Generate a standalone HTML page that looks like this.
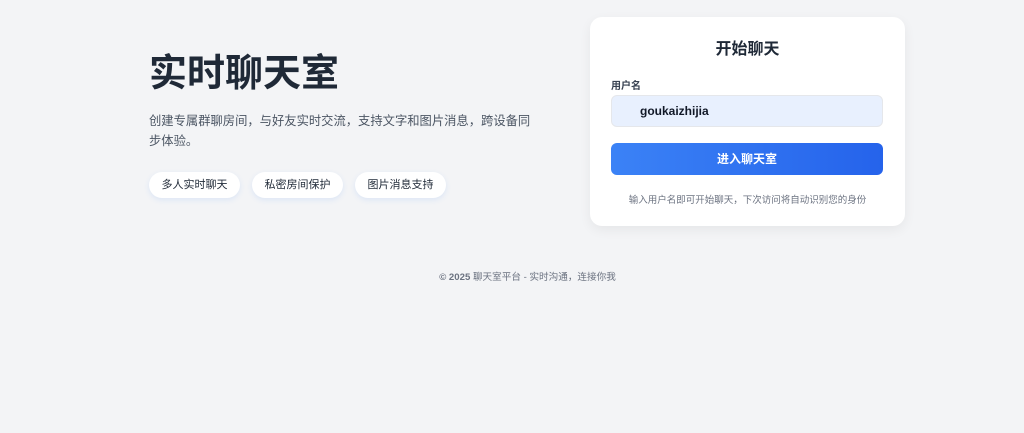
<!DOCTYPE html>
<html><head><meta charset="utf-8"><style>
*{margin:0;padding:0;box-sizing:border-box}
body{width:1024px;height:433px;background:#f3f4f6;font-family:"Liberation Sans","Noto Sans CJK SC",sans-serif;position:relative;overflow:hidden}
h1{position:absolute;left:149px;top:49px;font-size:38px;font-weight:700;color:#1f2937;line-height:50px;letter-spacing:0}
.desc{position:absolute;left:149px;top:111px;width:385px;font-size:12.3px;line-height:20px;color:#4b5563}
.tags{position:absolute;left:149px;top:172px;display:flex;gap:12px}
.tag{width:91px;text-align:center;height:26px;line-height:26px;background:#fff;border-radius:13px;font-size:11px;color:#1f2937;box-shadow:0 2px 6px rgba(59,130,246,.12)}
.card{position:absolute;left:590px;top:17px;width:315px;height:209px;background:#fff;border-radius:12px;box-shadow:0 4px 12px rgba(0,0,0,.06)}
.card h2{text-align:center;margin-top:22px;font-size:16px;font-weight:700;color:#1f2937;line-height:22px}
.lbl{position:absolute;left:21px;top:60px;font-size:10px;font-weight:700;color:#374151}
.inp{position:absolute;left:21px;top:78px;width:272px;height:32px;background:#e8f0fe;border-radius:6px;border:1px solid #e5e7eb;padding-left:28px;line-height:30px;font-size:12px;font-weight:700;color:#111827}
.btn{position:absolute;left:21px;top:126px;width:272px;height:32px;border-radius:6px;background:linear-gradient(90deg,#3b82f6,#2563eb);color:#fff;font-size:12px;font-weight:700;text-align:center;line-height:32px}
.hint{position:absolute;left:0;right:0;top:175px;text-align:center;font-size:9.5px;color:#6b7280}
.foot{position:absolute;left:0;width:1055px;top:269px;text-align:center;font-size:9.6px;color:#6b7280}
</style></head><body>
<h1>实时聊天室</h1>
<div class="desc">创建专属群聊房间，与好友实时交流，支持文字和图片消息，跨设备同步体验。</div>
<div class="tags"><div class="tag">多人实时聊天</div><div class="tag">私密房间保护</div><div class="tag">图片消息支持</div></div>
<div class="card"><h2>开始聊天</h2><div class="lbl">用户名</div><div class="inp">goukaizhijia</div><div class="btn">进入聊天室</div><div class="hint">输入用户名即可开始聊天，下次访问将自动识别您的身份</div></div>
<div class="foot"><b>© 2025</b> 聊天室平台 - 实时沟通，连接你我</div>
</body></html>
